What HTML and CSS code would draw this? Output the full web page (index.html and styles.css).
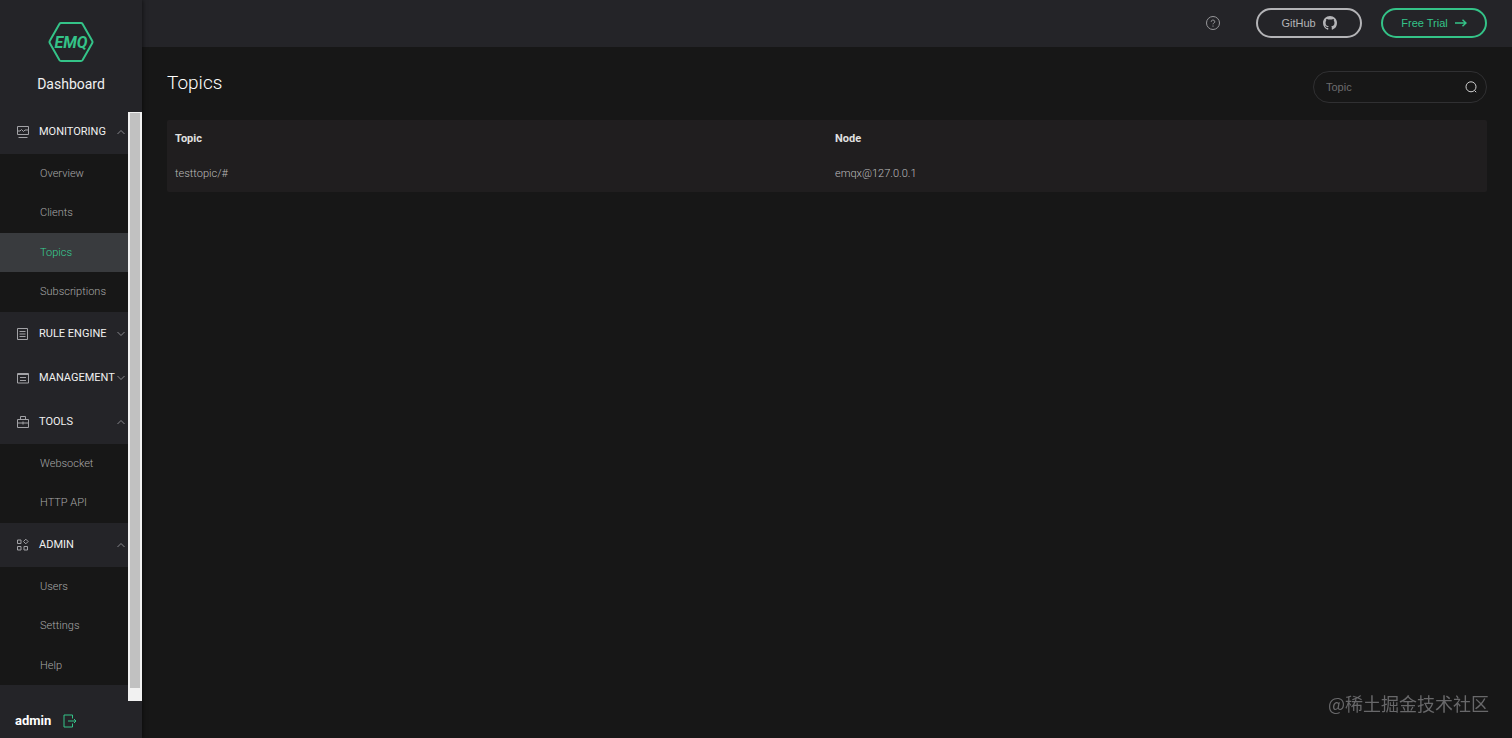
FILE: index.html
```html
<!DOCTYPE html>
<html lang="en">
<head>
    <meta charset="UTF-8">
    <meta name="viewport" content="width=device-width, initial-scale=1.0">
    <title>Dashboard - Topics</title>
    <link rel="stylesheet" href="styles.css">
</head>
<body>
    <aside class="sidebar">
        <div class="brand">
            <svg class="logo" viewBox="0 0 46 42" width="46" height="42">
                <path d="M13 2 H33 Q34 2 34.600 3 L44 19.500 Q45 21 44 22.500 L34.600 39 Q34 40 33 40 H13 Q12 40 11.400 39 L2 22.500 Q1 21 2 19.500 L11.400 3 Q12 2 13 2 Z"/>
                <text x="23" y="27" text-anchor="middle">EMQ</text>
            </svg>
            <span class="brand-name">Dashboard</span>
        </div>
        <div class="menu-wrap">
            <nav class="menu">
                <button type="button" class="menu-title">
                    <svg class="menu-icon" viewBox="0 0 14 14"><path d="M1.500 1.500h11v8h-11zM2.500 12.500h9M1.500 6h2.500l1.500-1.500 2 2 1.500-1.500h3.500"/></svg>
                    <span>MONITORING</span>
                    <svg class="arrow" viewBox="0 0 8 8"><path d="M.5 6 4 2.500 7.500 6"/></svg>
                </button>
                <ul class="submenu">
                    <li><a href="#">Overview</a></li>
                    <li><a href="#">Clients</a></li>
                    <li><a href="#" class="active">Topics</a></li>
                    <li><a href="#">Subscriptions</a></li>
                </ul>
                <button type="button" class="menu-title">
                    <svg class="menu-icon" viewBox="0 0 14 14"><path d="M1.500 1.500h10v11h-10zM3.500 4.500h6M3.500 7h6M3.500 9.500h6"/></svg>
                    <span>RULE ENGINE</span>
                    <svg class="arrow" viewBox="0 0 8 8"><path d="M.5 2 4 5.500 7.500 2"/></svg>
                </button>
                <button type="button" class="menu-title">
                    <svg class="menu-icon" viewBox="0 0 14 14"><path d="M1.500 2.500h11v9.500h-11zM1.500 3.500h11M4 6.500h6M4 9.500h6"/></svg>
                    <span>MANAGEMENT</span>
                    <svg class="arrow" viewBox="0 0 8 8"><path d="M.5 2 4 5.500 7.500 2"/></svg>
                </button>
                <button type="button" class="menu-title">
                    <svg class="menu-icon" viewBox="0 0 14 14"><path d="M1.500 4.500h11v8h-11zM4.500 4.500v-3h5v3M1.500 8h11M7 6.500v3"/></svg>
                    <span>TOOLS</span>
                    <svg class="arrow" viewBox="0 0 8 8"><path d="M.5 6 4 2.500 7.500 6"/></svg>
                </button>
                <ul class="submenu">
                    <li><a href="#">Websocket</a></li>
                    <li><a href="#">HTTP API</a></li>
                </ul>
                <button type="button" class="menu-title">
                    <svg class="menu-icon" viewBox="0 0 14 14"><path d="M1.500 2h3.500v3.500h-3.500zM1.500 8.500h3.500v3.500h-3.500zM8 8.500h3.500v3.500h-3.500zM9.800 1.200l2.300 2.300-2.300 2.300-2.300-2.300z"/></svg>
                    <span>ADMIN</span>
                    <svg class="arrow" viewBox="0 0 8 8"><path d="M.5 6 4 2.500 7.500 6"/></svg>
                </button>
                <ul class="submenu">
                    <li><a href="#">Users</a></li>
                    <li><a href="#">Settings</a></li>
                    <li><a href="#">Help</a></li>
                </ul>
            </nav>
            <div class="scrollbar"><div class="thumb"></div></div>
        </div>
        <div class="user">
            <span>admin</span>
            <button type="button" class="logout" aria-label="Log out">
                <svg viewBox="0 0 14 14" width="14" height="14"><path d="M9.500 4.500V1H1v12h8.500V9.500M5 7h8M11 5l2 2-2 2"/></svg>
            </button>
        </div>
    </aside>

    <div class="page">
        <header class="topbar">
            <a href="#" class="help" aria-label="Help">
                <svg viewBox="0 0 16 16" width="16" height="16"><circle cx="8" cy="8" r="6.500"/><path d="M6.200 6.800a1.800 1.600 0 1 1 2.600 1.300Q8 8.500 8 9.300M8 10.500v1.200"/></svg>
            </a>
            <a href="#" class="pill github">
                GitHub
                <svg viewBox="0 0 16 16" width="14" height="14"><path d="M8 0C3.580 0 0 3.580 0 8c0 3.540 2.290 6.530 5.470 7.590.4.070.55-.17.55-.38 0-.19-.01-.82-.01-1.490-2.010.37-2.530-.49-2.690-.94-.09-.23-.48-.94-.82-1.130-.28-.15-.68-.52-.01-.53.63-.01 1.080.58 1.230.82.72 1.210 1.870.87 2.330.66.07-.52.28-.87.51-1.070-1.780-.2-3.640-.89-3.640-3.950 0-.87.31-1.590.82-2.150-.08-.2-.36-1.020.08-2.120 0 0 .67-.21 2.200.82.64-.18 1.320-.27 2-.27s1.360.09 2 .27c1.530-1.040 2.200-.82 2.200-.82.44 1.100.16 1.920.08 2.120.51.56.82 1.270.82 2.150 0 3.070-1.870 3.750-3.650 3.950.29.25.54.73.54 1.480 0 1.070-.01 1.930-.01 2.200 0 .21.15.46.55.38A8.010 8.010 0 0 0 16 8c0-4.420-3.580-8-8-8z"/></svg>
            </a>
            <a href="#" class="pill trial">
                Free Trial
                <svg viewBox="0 0 12 12" width="12" height="12"><path d="M0 6h11M7.500 2.800 11 6 7.500 9.200"/></svg>
            </a>
        </header>
        <main class="content">
            <div class="page-head">
                <h1>Topics</h1>
                <form class="search">
                    <input type="text" placeholder="Topic" aria-label="Topic">
                    <button type="button" aria-label="Search">
                        <svg viewBox="0 0 12 12" width="12" height="12"><circle cx="6" cy="5.800" r="5"/><path d="M9.500 9.500l1.700 1.700"/></svg>
                    </button>
                </form>
            </div>
            <table class="topics">
                <thead>
                    <tr>
                        <th>Topic</th>
                        <th>Node</th>
                    </tr>
                </thead>
                <tbody>
                    <tr>
                        <td>testtopic/#</td>
                        <td>emqx@127.0.0.1</td>
                    </tr>
                </tbody>
            </table>
        </main>
    </div>
    <div class="watermark">@稀土掘金技术社区</div>
</body>
</html>
```
FILE: styles.css
```css
* {
    box-sizing: border-box;
}
body {
    margin: 0;
    display: flex;
    min-height: 100vh;
    background-color: #171717;
    color: #fff;
    font-family: Roboto, "Liberation Sans", sans-serif;
    font-size: 11px;
}
a {
    text-decoration: none;
    color: inherit;
}
button {
    border: none;
    background: none;
    padding: 0;
    font: inherit;
    color: inherit;
    cursor: pointer;
}
svg {
    fill: none;
    stroke: currentColor;
}

/* Sidebar */
.sidebar {
    width: 142px;
    flex: none;
    display: flex;
    flex-direction: column;
    background-color: #242428;
    box-shadow: 1px 0 4px rgba(0, 0, 0, 0.5);
    z-index: 1;
}
.brand {
    height: 110px;
    padding-top: 21px;
    display: flex;
    flex-direction: column;
    align-items: center;
    gap: 12px;
}
.logo {
    color: #34c388;
    stroke-width: 2;
}
.logo text {
    fill: #34c388;
    stroke: none;
    font-size: 16px;
    font-weight: 700;
    font-style: italic;
}
.brand-name {
    font-size: 14px;
    line-height: 18px;
    color: #f0f0f0;
}
.menu-wrap {
    display: flex;
}
.menu {
    flex: 1;
    min-width: 0;
}
.menu-title {
    width: 100%;
    height: 44px;
    padding: 0 3px 1px 16px;
    display: flex;
    align-items: center;
    white-space: nowrap;
    color: #f0f0f0;
}
.menu-icon {
    width: 14px;
    height: 14px;
    margin-right: 9px;
    flex: none;
    color: #a2a2a6;
}
.arrow {
    width: 8px;
    height: 8px;
    margin-left: auto;
    flex: none;
    color: #85858a;
}
.submenu {
    list-style: none;
    margin: 0;
    padding: 0;
    background-color: #171717;
}
.submenu a {
    display: block;
    padding-left: 40px;
    line-height: 39px;
    font-weight: 300;
    color: #a8a8a8;
}
.submenu li:nth-child(even) a {
    line-height: 40px;
}
.submenu .active {
    background-color: #393b3e;
    color: #38d094;
}
.scrollbar {
    width: 14px;
    margin: 2px 0 -16px;
    padding: 1px 2px 13px;
    display: flex;
    background-color: #f1f1f1;
}
.thumb {
    flex: 1;
    background-color: #c1c1c1;
}
.user {
    margin-top: auto;
    padding: 0 15px 7px;
    display: flex;
    align-items: center;
    gap: 12px;
    font-size: 13px;
    font-weight: 700;
    line-height: 20px;
}
.logout {
    display: flex;
    color: #34c388;
}

/* Top bar */
.page {
    flex: 1;
    min-width: 0;
}
.topbar {
    height: 47px;
    padding: 0 25px 1px;
    display: flex;
    align-items: center;
    justify-content: flex-end;
    background-color: #242428;
    font-family: "Liberation Sans", Arial, sans-serif;
}
.help {
    display: flex;
    margin-right: 35px;
    color: #98989b;
}
.pill {
    width: 106px;
    height: 30px;
    display: flex;
    align-items: center;
    justify-content: center;
    gap: 7px;
    border: 2px solid;
    border-radius: 15px;
}
.github {
    margin-right: 19px;
    color: #b4b4b7;
}
.github svg {
    fill: currentColor;
    stroke: none;
}
.trial {
    color: #34c388;
}
.trial svg {
    stroke-width: 1.5;
}

/* Content */
.content {
    padding: 24px 25px;
}
.page-head {
    display: flex;
    justify-content: space-between;
    margin-bottom: 17px;
}
h1 {
    margin: 0;
    font-size: 19px;
    font-weight: 300;
    line-height: 24px;
}
.search {
    width: 174px;
    height: 32px;
    padding: 0 9px 0 12px;
    display: flex;
    align-items: center;
    border: 1px solid #303032;
    border-radius: 16px;
}
.search input {
    flex: 1;
    min-width: 0;
    padding: 0;
    border: none;
    outline: none;
    background: none;
    color: #fff;
    font: 11px "Liberation Sans", Arial, sans-serif;
}
.search input::placeholder {
    color: #6c6c6e;
}
.search button {
    display: flex;
    color: #d0d0d0;
}
.topics {
    width: 100%;
    table-layout: fixed;
    border-spacing: 0;
    border-radius: 2px;
    background-color: #201e1f;
}
.topics th,
.topics td {
    height: 36px;
    padding: 0 8px;
    text-align: left;
    font-weight: 300;
    color: #bcbcbc;
}
.topics td {
    padding-bottom: 1px;
}
.topics th {
    color: #e0e0e0;
    font-weight: 700;
}
.watermark {
    position: fixed;
    right: 23px;
    bottom: 22px;
    color: #68686a;
    font: 18px/26px "Noto Sans CJK SC", sans-serif;
}
```
